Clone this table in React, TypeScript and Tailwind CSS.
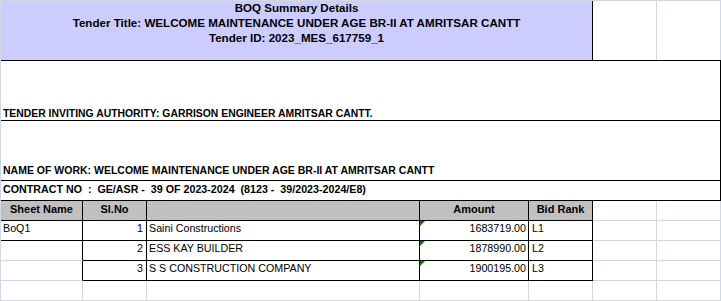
import React from "react";

const grid = "border-[#d0d7e5]";

const cols = ["w-[82px]", "w-[64px]", "w-[273px]", "w-[109px]", "w-[64px]"];

const bids = [
  { sheet: "BoQ1", sl: "1", name: "Saini Constructions", amount: "1683719.00", rank: "L1" },
  { sheet: "", sl: "2", name: "ESS KAY BUILDER", amount: "1878990.00", rank: "L2" },
  { sheet: "", sl: "3", name: "S S CONSTRUCTION COMPANY", amount: "1900195.00", rank: "L3" },
];

function Filler() {
  return (
    <>
      <div className={`w-[64px] shrink-0 border-r border-b ${grid}`} />
      <div className={`w-[64px] shrink-0 border-r border-b ${grid}`} />
    </>
  );
}

function HeaderCell({ w, children }: { w: string; children?: React.ReactNode }) {
  return (
    <div
      className={`${w} shrink-0 bg-[#c0c0c0] border-r border-b border-black text-center font-bold text-[11px] leading-[13px] pt-[2px]`}
    >
      {children}
    </div>
  );
}

function BidRow({ row, first }: { row: (typeof bids)[number]; first: boolean }) {
  return (
    <div className="flex h-[20px]">
      <div
        className={`${cols[0]} shrink-0 border-r border-b pl-[2px] leading-[13px] pt-[1px] ${
          first ? "border-b-black border-r-black" : `border-r-black border-b-[#d0d7e5]`
        }`}
      >
        {row.sheet}
      </div>
      <div className={`${cols[1]} shrink-0 border-r border-b border-black text-right pr-[3px] leading-[13px] pt-[1px]`}>
        {row.sl}
      </div>
      <div className={`${cols[2]} shrink-0 border-r border-b border-black pl-[2px] leading-[13px] pt-[1px]`}>
        {row.name}
      </div>
      <div
        className={`${cols[3]} relative shrink-0 border-r border-b border-black text-right pr-[2px] leading-[13px] pt-[1px]`}
      >
        <span className="absolute left-0 top-0 h-0 w-0 border-t-[5px] border-r-[5px] border-t-[#008000] border-r-transparent" />
        {row.amount}
      </div>
      <div className={`${cols[4]} shrink-0 border-r border-b border-black pl-[3px] leading-[13px] pt-[1px]`}>
        {row.rank}
      </div>
      <Filler />
    </div>
  );
}

export default function App() {
  return (
    <div
      className={`w-[721px] h-[301px] overflow-hidden bg-white border-l border-t ${grid} text-black text-[10.7px]`}
      style={{ fontFamily: '"Liberation Sans", Arial, sans-serif' }}
    >
      {/* title block */}
      <div className="flex h-[59px]">
        <div className="w-[592px] shrink-0 bg-[#ccccff] border-r border-black flex flex-col items-center -mt-px font-bold text-[11.6px] leading-[15px]">
          <div>BOQ Summary Details</div>
          <div>Tender Title: WELCOME MAINTENANCE UNDER AGE BR-II AT AMRITSAR CANTT</div>
          <div>Tender ID: 2023_MES_617759_1</div>
        </div>
        <div className={`w-[64px] shrink-0 border-r ${grid}`} />
        <div className={`w-[64px] shrink-0 border-r ${grid}`} />
      </div>

      {/* authority / work / contract */}
      <div className="w-[720px] border-t border-r border-black font-bold leading-[13px]">
        <div className="h-[60px] border-b border-black flex items-end pl-[2px] text-[10.4px]">
          TENDER INVITING AUTHORITY: GARRISON ENGINEER AMRITSAR CANTT.
        </div>
        <div className="h-[60px] border-b border-black flex items-end pl-[2px] pb-[3px] text-[10.5px]">
          NAME OF WORK: WELCOME MAINTENANCE UNDER AGE BR-II AT AMRITSAR CANTT
        </div>
        <div className="h-[20px] border-b border-black pl-[2px] pt-[2px] whitespace-pre">
          {"CONTRACT NO  :  GE/ASR -  39 OF 2023-2024  (8123 -  39/2023-2024/E8)"}
        </div>
      </div>

      {/* bids table */}
      <div className="flex h-[20px]">
        <HeaderCell w={cols[0]}>Sheet Name</HeaderCell>
        <HeaderCell w={cols[1]}>Sl.No</HeaderCell>
        <HeaderCell w={cols[2]} />
        <HeaderCell w={cols[3]}>Amount</HeaderCell>
        <HeaderCell w={cols[4]}>Bid Rank</HeaderCell>
        <Filler />
      </div>
      {bids.map((b, i) => (
        <BidRow key={b.sl} row={b} first={i === 0} />
      ))}
      <div className="flex h-[20px]">
        {cols.map((c, i) => (
          <div key={i} className={`${c} shrink-0 border-r border-b ${grid}`} />
        ))}
        <Filler />
      </div>
    </div>
  );
}
